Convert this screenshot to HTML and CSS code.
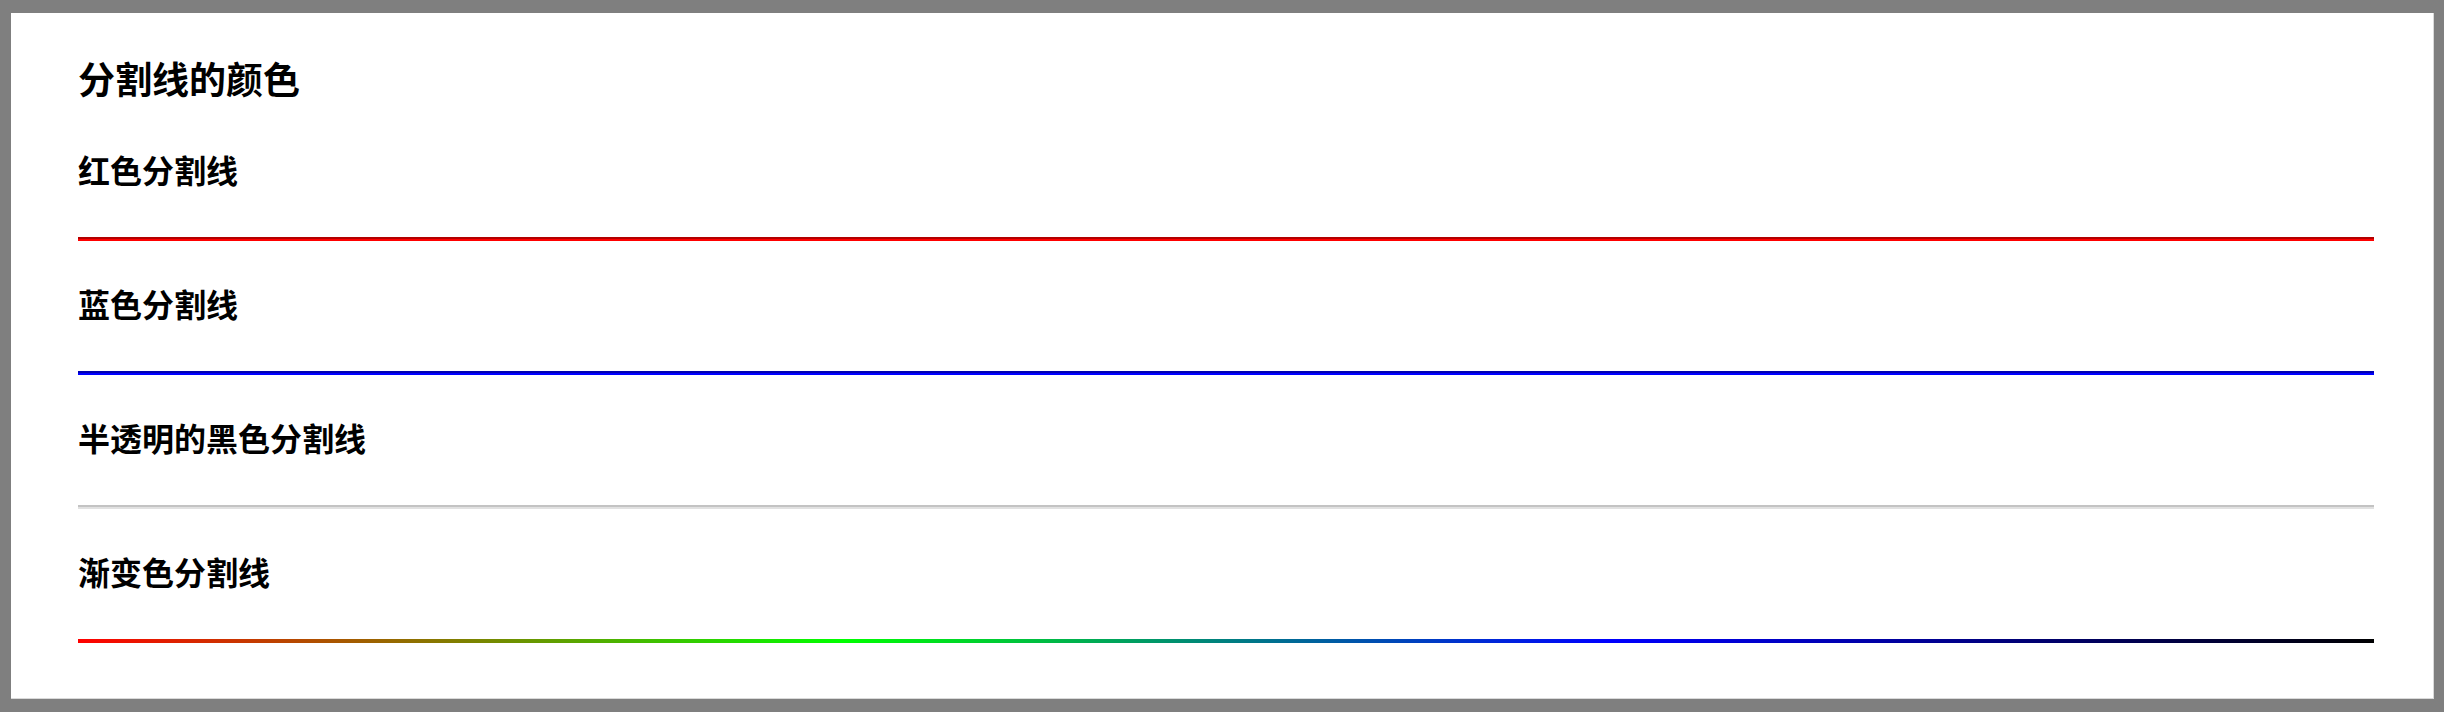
FILE: index.html
```html
<!DOCTYPE html>
<html lang="zh-CN">
<head>
    <meta charset="UTF-8">
    <meta name="viewport" content="width=device-width, initial-scale=1.0">
    <title>分割线的颜色</title>
    <link rel="stylesheet" href="styles.css">
</head>
<body>
    <div class="card">
        <h2 class="title">分割线的颜色</h2>

        <div class="section">
            <h3>红色分割线</h3>
            <hr class="divider divider-red">
        </div>

        <div class="section">
            <h3>蓝色分割线</h3>
            <hr class="divider divider-blue">
        </div>

        <div class="section">
            <h3>半透明的黑色分割线</h3>
            <hr class="divider divider-gray">
        </div>

        <div class="section">
            <h3>渐变色分割线</h3>
            <hr class="divider divider-gradient">
        </div>
    </div>
</body>
</html>
```

FILE: styles.css
```css
* {
    margin: 0;
    padding: 0;
    box-sizing: border-box;
}

body {
    font-family: "Noto Sans CJK SC", "Noto Sans", sans-serif;
    background-color: #7f7f7f;
    color: #000000;
    padding: 13px 10px 13px 11px;
}

.card {
    display: flex;
    flex-direction: column;
    background-color: #ffffff;
    border-right: 1px solid #d9d9d9;
    border-bottom: 1px solid #d9d9d9;
    padding: 39px 59px 55px 67px;
}

.title {
    font-size: 37px;
    font-weight: bold;
    line-height: 52px;
    margin-bottom: 3px;
}

.section {
    display: flex;
    flex-direction: column;
}

.section h3 {
    font-size: 32px;
    font-weight: bold;
    line-height: 48px;
    margin-top: 38px;
    margin-bottom: 44px;
}

.divider {
    height: 4px;
    border: none;
}

.divider-red {
    border-top: 2px solid #b30000;
    border-bottom: 2px solid #ff0000;
}

.divider-blue {
    border-top: 2px solid #0000b3;
    border-bottom: 2px solid #0000ff;
}

.divider-gray {
    border-top: 2px solid #c3c3c3;
    border-bottom: 2px solid #e1e1e1;
}

.divider-gradient {
    background: linear-gradient(to right, red, lime, blue, black);
}
```
